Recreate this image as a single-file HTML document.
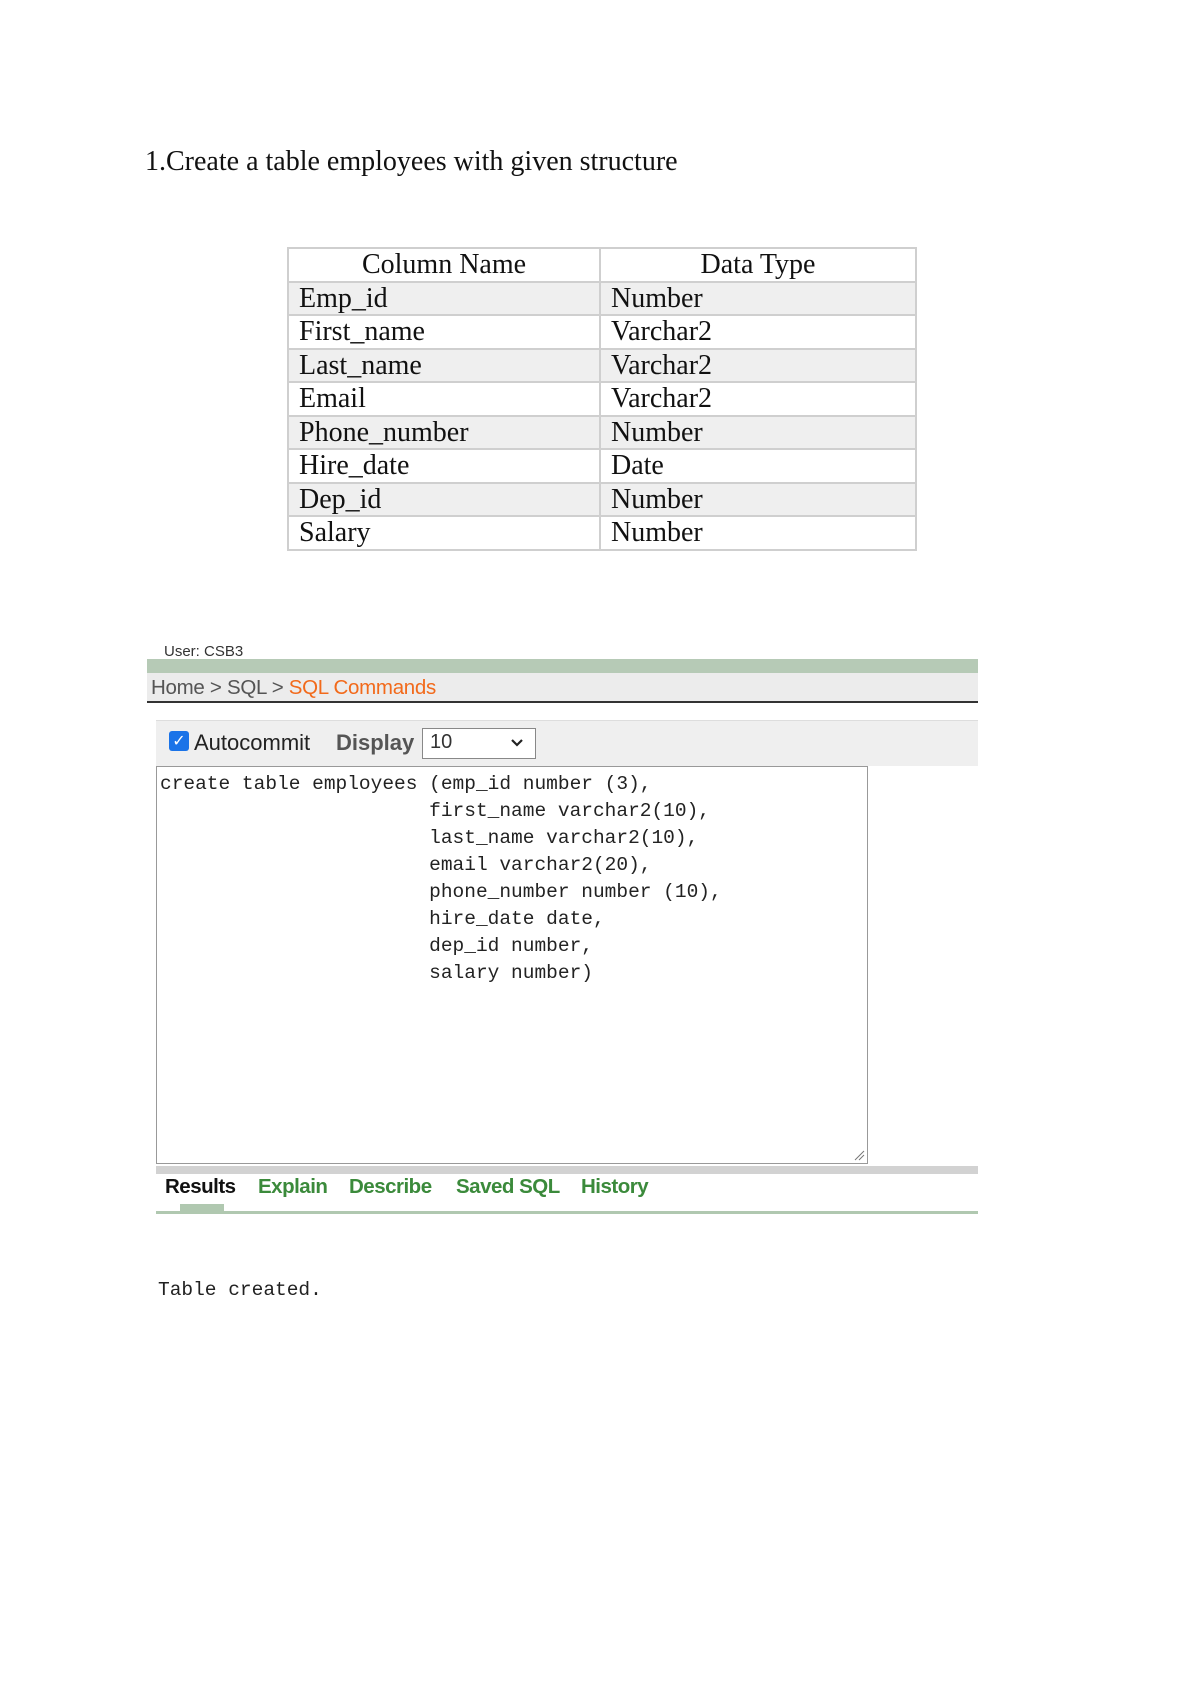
<!DOCTYPE html>
<html><head><meta charset="utf-8">
<style>
body{margin:0;width:1200px;height:1698px;background:#fff;position:relative;overflow:hidden}
.a{position:absolute}
.serif{font-family:"Liberation Serif",serif;color:#111}
.sans{font-family:"Liberation Sans",sans-serif}
.mono{font-family:"Liberation Mono",monospace}
table{border-collapse:collapse}
td{border:2px solid #cfcfcf;height:31.5px;padding:0 0 0 10px;font-family:"Liberation Serif",serif;font-size:28px;line-height:31px;color:#111}
tr:nth-child(even) td{background:#efefef}
</style></head><body>
<div class="a serif" style="left:145px;top:146px;font-size:28px;">1.Create a table employees with given structure</div>

<table class="a" style="left:287px;top:247px;width:630px;border:2px solid #c4c4c4">
<tr><td style="text-align:center;width:310px;padding:0">Column Name</td><td style="text-align:center;padding:0">Data Type</td></tr>
<tr><td>Emp_id</td><td>Number</td></tr>
<tr><td>First_name</td><td>Varchar2</td></tr>
<tr><td>Last_name</td><td>Varchar2</td></tr>
<tr><td>Email</td><td>Varchar2</td></tr>
<tr><td>Phone_number</td><td>Number</td></tr>
<tr><td>Hire_date</td><td>Date</td></tr>
<tr><td>Dep_id</td><td>Number</td></tr>
<tr><td>Salary</td><td>Number</td></tr>
</table>

<div class="a sans" style="left:164px;top:643px;font-size:15px;color:#333">User: CSB3</div>
<div class="a" style="left:147px;top:659px;width:831px;height:14px;background:#b6cab6"></div>
<div class="a" style="left:147px;top:673px;width:831px;height:28px;background:#ececec;border-bottom:2px solid #333"></div>
<div class="a sans" style="left:151px;top:676px;font-size:20.5px;color:#555;letter-spacing:-0.3px">Home &gt; SQL &gt; <span style="color:#f26a1b">SQL Commands</span></div>

<div class="a" style="left:156px;top:720px;width:822px;height:45px;background:#efefef;border-top:1px solid #ddd"></div>
<div class="a" style="left:169px;top:731px;width:20px;height:20px;background:#1a73e8;border-radius:3px;color:#fff;font-size:16px;line-height:20px;text-align:center;font-family:'DejaVu Sans',sans-serif">✓</div>
<div class="a sans" style="left:194px;top:730px;font-size:22px;color:#222">Autocommit</div>
<div class="a sans" style="left:336px;top:730px;font-size:22px;color:#555;font-weight:bold">Display</div>
<div class="a" style="left:422px;top:728px;width:112px;height:29px;background:#fff;border:1px solid #888"></div>
<div class="a sans" style="left:430px;top:731px;font-size:20px;color:#333">10</div>
<svg class="a" style="left:510px;top:738px" width="14" height="10"><path d="M2 2 L7 7 L12 2" stroke="#222" stroke-width="2.2" fill="none"/></svg>

<div class="a" style="left:156px;top:766px;width:710px;height:396px;background:#fff;border:1px solid #999"></div>
<pre class="a mono" style="margin:0;left:160px;top:771px;font-size:19.5px;line-height:27px;color:#222">create table employees (emp_id number (3),
                       first_name varchar2(10),
                       last_name varchar2(10),
                       email varchar2(20),
                       phone_number number (10),
                       hire_date date,
                       dep_id number,
                       salary number)</pre>
<svg class="a" style="left:853px;top:1149px" width="12" height="12"><path d="M2 11 L11 2 M6 11 L11 6" stroke="#777" stroke-width="1"/></svg>

<div class="a" style="left:156px;top:1166px;width:822px;height:8px;background:#d2d2d2"></div>
<div class="a sans" style="left:165px;top:1175px;font-size:20.5px;color:#111;font-weight:bold;letter-spacing:-0.5px">Results</div>
<div class="a sans" style="left:258px;top:1175px;font-size:20.5px;color:#3b8a3b;font-weight:bold;letter-spacing:-0.5px">Explain</div>
<div class="a sans" style="left:349px;top:1175px;font-size:20.5px;color:#3b8a3b;font-weight:bold;letter-spacing:-0.5px">Describe</div>
<div class="a sans" style="left:456px;top:1175px;font-size:20.5px;color:#3b8a3b;font-weight:bold;letter-spacing:-0.5px">Saved SQL</div>
<div class="a sans" style="left:581px;top:1175px;font-size:20.5px;color:#3b8a3b;font-weight:bold;letter-spacing:-0.5px">History</div>
<div class="a" style="left:180px;top:1204px;width:44px;height:8px;background:#b0c8b0"></div>
<div class="a" style="left:156px;top:1211px;width:822px;height:3px;background:#b0c8b0"></div>

<div class="a mono" style="left:158px;top:1279px;font-size:19.5px;color:#222">Table created.</div>
</body></html>
